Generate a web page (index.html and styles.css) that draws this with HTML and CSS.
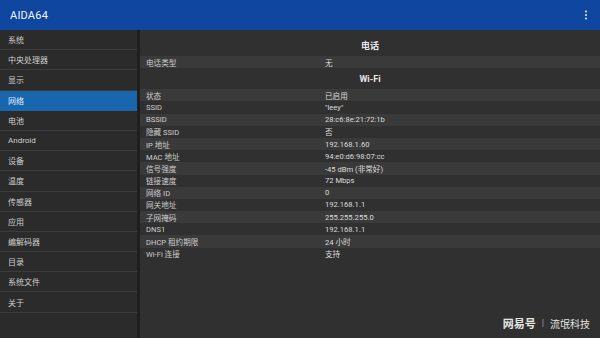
FILE: index.html
```html
<!DOCTYPE html>
<html lang="zh">
<head>
<meta charset="utf-8">
<link rel="stylesheet" href="styles.css">
</head>
<body>
<div class="app">
  <header class="appbar">
    <span class="title">AIDA64</span>
    <svg class="menu" width="4" height="10" viewBox="0 0 4 10"><circle cx="2" cy="1.5" r="1.1" fill="#dfe6f2"/><circle cx="2" cy="5" r="1.1" fill="#dfe6f2"/><circle cx="2" cy="8.5" r="1.1" fill="#dfe6f2"/></svg>
  </header>
  <div class="main">
    <nav class="sidebar">
      <div class="item">系统</div>
      <div class="item">中央处理器</div>
      <div class="item">显示</div>
      <div class="item active">网络</div>
      <div class="item">电池</div>
      <div class="item">Android</div>
      <div class="item">设备</div>
      <div class="item">温度</div>
      <div class="item">传感器</div>
      <div class="item">应用</div>
      <div class="item">编解码器</div>
      <div class="item">目录</div>
      <div class="item">系统文件</div>
      <div class="item">关于</div>
    </nav>
    <section class="content">
      <div class="head first">电话</div>
      <div class="row odd"><span class="k">电话类型</span><span class="v">无</span></div>
      <div class="head">Wi-Fi</div>
      <div class="row odd"><span class="k">状态</span><span class="v">已启用</span></div>
      <div class="row"><span class="k">SSID</span><span class="v">"leey"</span></div>
      <div class="row odd"><span class="k">BSSID</span><span class="v">28:c6:8e:21:72:1b</span></div>
      <div class="row"><span class="k">隐藏 SSID</span><span class="v">否</span></div>
      <div class="row odd"><span class="k">IP 地址</span><span class="v">192.168.1.60</span></div>
      <div class="row"><span class="k">MAC 地址</span><span class="v">94:e0:d6:98:07:cc</span></div>
      <div class="row odd"><span class="k">信号强度</span><span class="v">-45 dBm (非常好)</span></div>
      <div class="row"><span class="k">链接速度</span><span class="v">72 Mbps</span></div>
      <div class="row odd"><span class="k">网络 ID</span><span class="v">0</span></div>
      <div class="row"><span class="k">网关地址</span><span class="v">192.168.1.1</span></div>
      <div class="row odd"><span class="k">子网掩码</span><span class="v">255.255.255.0</span></div>
      <div class="row"><span class="k">DNS1</span><span class="v">192.168.1.1</span></div>
      <div class="row odd"><span class="k">DHCP 租约期限</span><span class="v">24 小时</span></div>
      <div class="row"><span class="k">Wi-Fi 连接</span><span class="v">支持</span></div>
      <div class="watermark"><b>网易号</b><span class="bar">|</span>流氓科技</div>
    </section>
  </div>
</div>
</body>
</html>
```
FILE: styles.css
```css
* { box-sizing: border-box; }
html, body { margin: 0; padding: 0; }
body {
  width: 600px;
  height: 338px;
  overflow: hidden;
  background: #303030;
  font-family: Roboto, "Noto Sans CJK SC", sans-serif;
  color: #d6d6d6;
}
.app { display: flex; flex-direction: column; height: 338px; }
.appbar {
  height: 30px;
  flex: none;
  display: flex;
  align-items: center;
  justify-content: space-between;
  padding: 0 12px 0 10px;
  background: #0f46a0;
  box-shadow: 0 1px 0 #1d2a3c;
}
.title { color: #f2f4f8; font-size: 11px; letter-spacing: 0.2px; }
.menu { display: block; }
.main { flex: 1; display: flex; min-height: 0; }
.sidebar {
  width: 140px;
  flex: none;
  background: #2b2b2b;
  border-right: 3px solid #1f1f1f;
  display: flex;
  flex-direction: column;
}
.item {
  height: 20.2px;
  display: flex;
  align-items: center;
  padding-left: 8px;
  font-size: 8px;
  color: #cfcfcf;
  border-bottom: 1px solid #3c3c3c;
}
.item.active { background: #1766ae; color: #e8eef6; border-bottom-color: #1766ae; }
.content {
  flex: 1;
  position: relative;
  background: #303030;
  display: flex;
  flex-direction: column;
}
.head {
  height: 21px;
  display: flex;
  align-items: center;
  justify-content: center;
  font-size: 9px;
  font-weight: bold;
  color: #e6e6e6;
}
.head.first { height: 26px; padding-top: 4px; }
.row {
  height: 12.2px;
  display: flex;
  align-items: center;
  font-size: 7.6px;
  padding-left: 6px;
}
.row.odd { background: #3a3a3a; }
.row:first-of-type { height: 13px; }
.k { width: 179px; color: #cdcdcd; }
.v { color: #dcdcdc; }
.watermark {
  position: absolute;
  right: 10px;
  bottom: 7px;
  font-size: 10px;
  color: #e4e4e4;
  display: flex;
  align-items: center;
  gap: 6px;
}
.watermark b { font-size: 11px; font-weight: 600; }
.watermark .bar { color: #aaa; font-size: 9px; }
```
